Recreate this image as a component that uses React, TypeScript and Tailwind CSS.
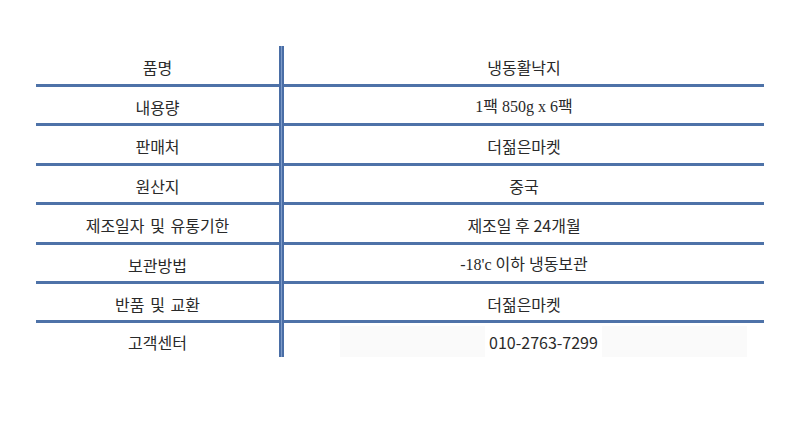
const rows = [
  { label: "품명", value: "냉동활낙지", h: "h-[41px]" },
  { label: "내용량", value: "1팩 850g x 6팩", h: "h-[39px]", serif: true },
  { label: "판매처", value: "더젊은마켓", h: "h-[40px]" },
  { label: "원산지", value: "중국", h: "h-[39px]" },
  { label: "제조일자 및 유통기한", value: "제조일 후 24개월", h: "h-[40px]" },
  { label: "보관방법", value: "-18'c 이하 냉동보관", h: "h-[39px]", serif: true },
  { label: "반품 및 교환", value: "더젊은마켓", h: "h-[39px]" },
  { label: "고객센터", value: "010-2763-7299", h: "h-[34px]", last: true },
];

const sans = "font-['Noto_Sans_CJK_KR',sans-serif]";
const serif = "font-['Liberation_Serif','Noto_Sans_CJK_KR',serif]";

export default function App() {
  return (
    <div className={`w-[800px] h-[447px] bg-white ${sans} text-[16px] text-[#2a2a2a]`}>
      <div className="pt-[46px] pl-[36px]">
        <div className="flex w-[728px]">
          {/* left column */}
          <div className="w-[243px] [word-spacing:2px]">
            {rows.map((r) => (
              <div
                key={r.label}
                className={`${r.h} flex items-center justify-center pt-[3px] ${r.last ? "" : "border-b-[3px] border-[#4e72a8]"}`}
              >
                {r.label}
              </div>
            ))}
          </div>

          {/* divider */}
          <div className="w-[5px] bg-[#4a6ea6] flex justify-center">
            <div className="w-[1px] bg-[#7e9bc8]" />
          </div>

          {/* right column */}
          <div className="flex-1">
            {rows.map((r) => (
              <div
                key={r.label}
                className={`${r.h} flex items-center justify-center pt-[3px] ${r.last ? "" : "border-b-[3px] border-[#4e72a8]"}`}
              >
                {r.last ? (
                  <div className="ml-[56px] mr-[17px] w-full h-full flex items-center justify-center bg-[#fafafa]">
                    <span className="bg-white px-[4px] py-[4px]">{r.value}</span>
                  </div>
                ) : (
                  <span className={r.serif ? serif : ""}>{r.value}</span>
                )}
              </div>
            ))}
          </div>
        </div>
      </div>
    </div>
  );
}
